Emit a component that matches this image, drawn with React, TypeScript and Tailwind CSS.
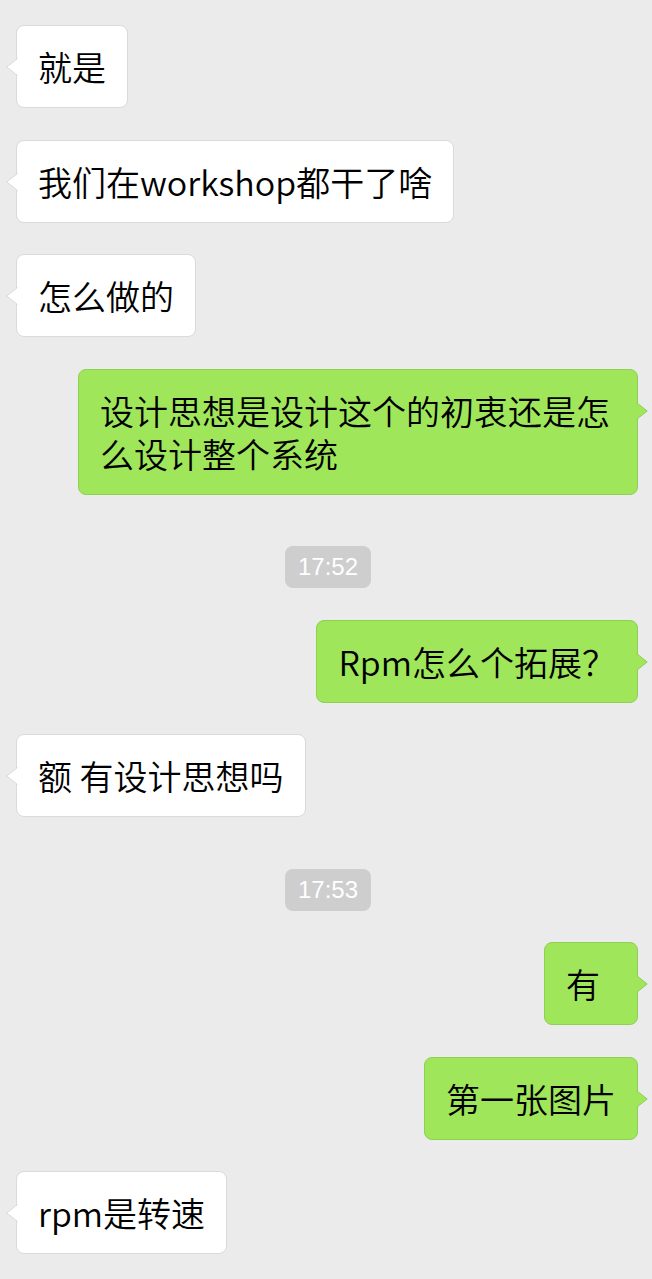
type Msg =
  | { kind: 'in' | 'out'; text: string }
  | { kind: 'time'; text: string };

const messages: Msg[] = [
  { kind: 'in', text: '就是' },
  { kind: 'in', text: '我们在workshop都干了啥' },
  { kind: 'in', text: '怎么做的' },
  { kind: 'out', text: '设计思想是设计这个的初衷还是怎么设计整个系统' },
  { kind: 'time', text: '17:52' },
  { kind: 'out', text: 'Rpm怎么个拓展？' },
  { kind: 'in', text: '额 有设计思想吗' },
  { kind: 'time', text: '17:53' },
  { kind: 'out', text: '有' },
  { kind: 'out', text: '第一张图片' },
  { kind: 'in', text: 'rpm是转速' },
];

const font = { fontFamily: '"Noto Sans CJK SC", "Noto Sans", sans-serif', fontWeight: 350 };

function Tail({ side, fill, stroke }: { side: 'left' | 'right'; fill: string; stroke: string }) {
  // small arrow sticking out of the bubble, overlapping its border by 1px
  if (side === 'left') {
    return (
      <svg width="12" height="18" viewBox="0 0 12 18" className="absolute -left-[11px] top-[32px]">
        <path d="M11.5 0.5 L0.8 9 L11.5 17.5 Z" fill={fill} />
        <path d="M11.5 0.5 L0.8 9 L11.5 17.5" fill="none" stroke={stroke} strokeWidth="1" />
        <rect x="11" y="1.5" width="1" height="15" fill={fill} />
      </svg>
    );
  }
  return (
    <svg width="12" height="18" viewBox="0 0 12 18" className="absolute -right-[11px] top-[32px]">
      <path d="M0.5 0.5 L11.2 9 L0.5 17.5 Z" fill={fill} />
      <path d="M0.5 0.5 L11.2 9 L0.5 17.5" fill="none" stroke={stroke} strokeWidth="1" />
      <rect x="0" y="1.5" width="1" height="15" fill={fill} />
    </svg>
  );
}

function Bubble({ side, text }: { side: 'in' | 'out'; text: string }) {
  const isIn = side === 'in';
  return (
    <div className={`flex ${isIn ? 'justify-start pl-4' : 'justify-end pr-[14px]'}`}>
      <div
        className={`relative min-w-[94px] max-w-[560px] rounded-[8px] border px-[21px] py-[19px] text-[34px] leading-[43px] text-black ${
          isIn ? 'bg-white border-[#dadada]' : 'bg-[#9fe65b] border-[#8fcf52]'
        }`}
        style={font}
      >
        {text}
        {isIn ? (
          <Tail side="left" fill="#ffffff" stroke="#dadada" />
        ) : (
          <Tail side="right" fill="#9fe65b" stroke="#8fcf52" />
        )}
      </div>
    </div>
  );
}

function TimeStamp({ text }: { text: string }) {
  return (
    <div className="mt-5 flex justify-center pl-[4px]">
      <span
        className="rounded-[8px] bg-[#cecece] px-[13px] text-[24px] leading-[42px] text-white"
        style={{ fontFamily: '"Liberation Sans", Arial, sans-serif' }}
      >
        {text}
      </span>
    </div>
  );
}

export default function App() {
  return (
    <div className="min-h-[1279px] w-[652px] overflow-hidden bg-[#ebebeb] pt-[25px]">
      <div className="flex flex-col gap-[31.5px]">
        {messages.map((m, i) =>
          m.kind === 'time' ? (
            <TimeStamp key={i} text={m.text} />
          ) : (
            <Bubble key={i} side={m.kind} text={m.text} />
          )
        )}
      </div>
    </div>
  );
}
